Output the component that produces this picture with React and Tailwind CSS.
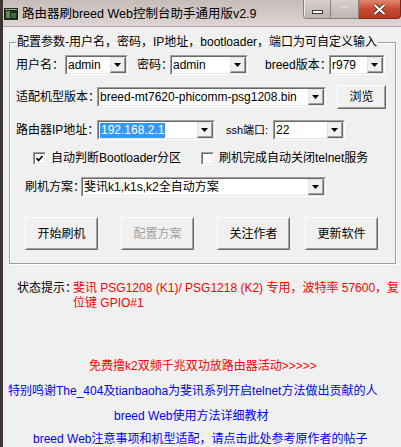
import React from 'react';

const font = { fontFamily: '"Liberation Sans", "Noto Sans CJK SC", sans-serif' };

// classic sunken combo box with a raised drop-down button
const Combo = ({ w, value, selected }) => (
  <div className={`${w} h-[20px] shrink-0 border border-t-[#a0a0a0] border-l-[#a0a0a0] border-b-white border-r-white`}>
    <div className="flex h-full border border-t-[#696969] border-l-[#696969] border-b-[#e3e3e3] border-r-[#e3e3e3] bg-white">
      <div className="flex flex-1 items-center overflow-hidden whitespace-nowrap pl-[1px]">
        {selected ? (
          <span className="bg-[#3399ff] px-[1px] leading-[15px] text-white">{value}</span>
        ) : (
          <span className="leading-[15px]">{value}</span>
        )}
      </div>
      <div className="w-[16px] border border-t-[#e3e3e3] border-l-[#e3e3e3] border-b-[#696969] border-r-[#696969] bg-[#f0f0f0]">
        <div className="flex h-full items-center justify-center border-b border-r border-[#a0a0a0]">
          <svg width="7" height="4" viewBox="0 0 7 4">
            <polygon points="0,0 7,0 3.5,4" fill="#000" />
          </svg>
        </div>
      </div>
    </div>
  </div>
);

const Button = ({ w, h, children, disabled }) => (
  <div className={`${w} ${h} shrink-0 border border-t-white border-l-white border-b-[#696969] border-r-[#696969]`}>
    <div className={`flex h-full items-center justify-center border border-t-[#f0f0f0] border-l-[#f0f0f0] border-b-[#a0a0a0] border-r-[#a0a0a0] bg-[#f0f0f0] ${disabled ? 'text-[#a0a0a0]' : 'text-black'}`}>
      {children}
    </div>
  </div>
);

const CheckBox = ({ checked }) => (
  <div className="h-[13px] w-[13px] shrink-0 border border-t-[#a0a0a0] border-l-[#a0a0a0] border-b-white border-r-white">
    <div className="flex h-full items-center justify-center border border-t-[#696969] border-l-[#696969] border-b-[#e3e3e3] border-r-[#e3e3e3] bg-white">
      {checked && (
        <svg width="7" height="7" viewBox="0 0 7 7">
          <polyline points="0.5,3 2.5,5.5 6.5,1" fill="none" stroke="#000" strokeWidth="1.6" />
        </svg>
      )}
    </div>
  </div>
);

const Label = ({ w, children }) => (
  <span className={`${w} shrink-0 whitespace-nowrap leading-[15px]`}>{children}</span>
);

const App = () => {
  return (
    <div style={font} className="flex h-[447px] w-[401px] flex-col overflow-hidden border-l-[3px] border-[#3e3431] bg-[#f0f0f0] text-[12px] text-black">
      {/* Title bar */}
      <div className="flex h-[27px] shrink-0 items-start justify-between border-b border-[#b3a9a6] bg-gradient-to-b from-[#c6bcba] to-[#ddd6d4]">
        <div className="flex items-center pt-[6px]">
          <svg width="14" height="12" viewBox="0 0 14 12" className="ml-[1px]">
            <rect x="0" y="0" width="14" height="12" fill="#1d2a1d" />
            <rect x="2" y="3" width="4" height="7" fill="#5f8a4e" />
            <rect x="7" y="5" width="5" height="5" fill="#3d6b35" />
            <rect x="1" y="1" width="12" height="1" fill="#8fb07f" />
          </svg>
          <span className="ml-[4px] whitespace-nowrap text-[12.5px] leading-[16px] text-black">路由器刷breed Web控制台助手通用版v2.9</span>
        </div>
        <div className="flex h-[19px]">
          <div className="flex w-[28px] items-end justify-center rounded-bl-[4px] border border-t-0 border-[#8a7f7c] bg-gradient-to-b from-[#d8d0ce] to-[#bfb4b1] pb-[4px] shadow-[inset_1px_0_0_#eee]">
            <div className="h-[4px] w-[11px] border border-[#3a3a3a] bg-white" />
          </div>
          <div className="flex w-[28px] items-center justify-center border-b border-r border-[#8a7f7c] bg-gradient-to-b from-[#d8d0ce] to-[#bfb4b1]">
            <div className="h-[8px] w-[10px] border border-[#cfc6c4] shadow-[inset_0_2px_0_#d9d2d0]" />
          </div>
          <div className="flex w-[42px] items-center justify-center rounded-br-[4px] border-b border-r border-[#7a2a1c] bg-gradient-to-b from-[#e0866f] via-[#c74a31] to-[#b53a22]">
            <svg width="13" height="11" viewBox="0 0 13 11">
              <path d="M1.5 1 L11.5 10 M11.5 1 L1.5 10" stroke="#3a1a14" strokeWidth="3.6" />
              <path d="M1.5 1 L11.5 10 M11.5 1 L1.5 10" stroke="#fff" strokeWidth="2.2" />
            </svg>
          </div>
        </div>
      </div>

      {/* Group box */}
      <fieldset className="ml-[6px] mt-[8px] w-[387px] shrink-0 border border-[#a0a0a0] shadow-[inset_1px_1px_0_#fff,1px_1px_0_#fff]">
        <legend className="ml-[6px] whitespace-nowrap px-[1px] leading-[14px]">配置参数-用户名，密码，IP地址，bootloader，端口为可自定义输入</legend>

        <div className="mt-[6px] flex items-center pl-[6px]">
          <Label w="w-[49px]">用户名：</Label>
          <Combo w="w-[63px]" value="admin" />
          <span className="w-[9px] shrink-0" />
          <Label w="w-[33px]">密码：</Label>
          <Combo w="w-[78px]" value="admin" />
          <span className="w-[17px] shrink-0" />
          <Label w="w-[64px]">breed版本：</Label>
          <Combo w="w-[56px]" value="r979" />
        </div>

        <div className="mt-[10px] flex items-center pl-[6px]">
          <Label w="w-[81px]">适配机型版本：</Label>
          <Combo w="w-[229px]" value="breed-mt7620-phicomm-psg1208.bin" />
          <div className="ml-[11px]">
            <Button w="w-[49px]" h="h-[24px]">浏览</Button>
          </div>
        </div>

        <div className="mt-[11px] flex items-center pl-[6px]">
          <Label w="w-[81px]">路由器IP地址：</Label>
          <Combo w="w-[118px]" value="192.168.2.1" selected />
          <span className="w-[11px] shrink-0" />
          <span className="w-[47px] shrink-0 whitespace-nowrap text-[11px] leading-[15px]">ssh端口:</span>
          <Combo w="w-[72px]" value="22" />
        </div>

        <div className="mt-[11px] flex items-center pl-[23px]">
          <div className="flex w-[168px] shrink-0 items-center">
            <CheckBox checked />
            <span className="ml-[5px] whitespace-nowrap leading-[14px]">自动判断Bootloader分区</span>
          </div>
          <CheckBox />
          <span className="ml-[5px] whitespace-nowrap leading-[14px]">刷机完成自动关闭telnet服务</span>
        </div>

        <div className="mt-[12px] flex items-center pl-[15px]">
          <Label w="w-[56px]">刷机方案：</Label>
          <Combo w="w-[245px]" value="斐讯k1,k1s,k2全自动方案" />
        </div>

        <div className="mb-[13px] mt-[20px] flex items-center pl-[15px]">
          <Button w="w-[73px]" h="h-[33px]">开始刷机</Button>
          <div className="ml-[23px]">
            <Button w="w-[73px]" h="h-[33px]" disabled>配置方案</Button>
          </div>
          <div className="ml-[23px]">
            <Button w="w-[73px]" h="h-[33px]">关注作者</Button>
          </div>
          <div className="ml-[15px]">
            <Button w="w-[73px]" h="h-[33px]">更新软件</Button>
          </div>
        </div>
      </fieldset>

      {/* Status */}
      <div className="mt-[17px] flex shrink-0 pl-[14px] leading-[15px]">
        <span className="w-[56px] shrink-0 whitespace-nowrap">状态提示：</span>
        <div className="text-[#ff0000]">
          <div className="whitespace-nowrap">斐讯 PSG1208 (K1)/ PSG1218 (K2) 专用，波特率 57600，复</div>
          <div className="whitespace-nowrap">位键 GPIO#1</div>
        </div>
      </div>

      {/* Links */}
      <div className="mt-[48px] shrink-0 whitespace-nowrap pl-[86px] leading-[15px] text-[#ff0000]">免费撸k2双频千兆双功放路由器活动&gt;&gt;&gt;&gt;&gt;</div>
      <div className="mt-[10px] shrink-0 whitespace-nowrap pl-[5px] leading-[15px] text-[#0000ff]">特别鸣谢The_404及tianbaoha为斐讯系列开启telnet方法做出贡献的人</div>
      <div className="mt-[10px] shrink-0 whitespace-nowrap pl-[111px] leading-[15px] text-[#0000ff]">breed Web使用方法详细教材</div>
      <div className="mt-[8px] shrink-0 whitespace-nowrap pl-[30px] leading-[15px] text-[#0000ff]">breed Web注意事项和机型适配，请点击此处参考原作者的帖子</div>
    </div>
  );
};

export default App;
